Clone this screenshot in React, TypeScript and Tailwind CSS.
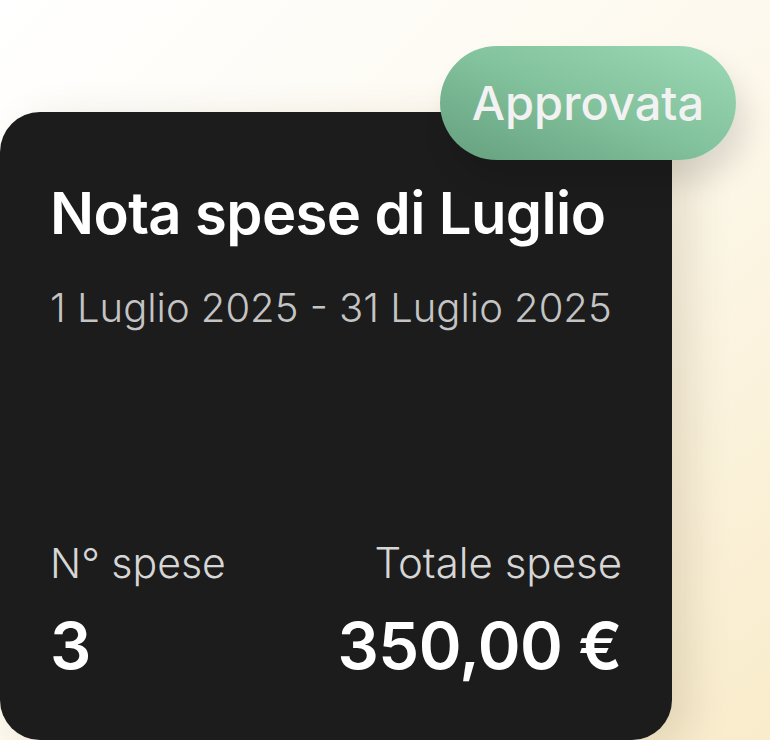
export default function App() {
  return (
    <div className="relative h-[740px] w-[770px] overflow-hidden bg-gradient-to-br from-[#ffffff] via-[#fdf9ee] to-[#f9eccb] font-['Inter',sans-serif]">
      <div className="pt-[112px]">
        <div className="flex h-[628px] w-[672px] flex-col justify-between rounded-[40px] bg-[#1c1c1c] px-[50px] pt-[71px] pb-[62px] shadow-[18px_10px_40px_rgba(120,100,60,0.18)]">
          <div>
            <h1 className="text-[58px] font-semibold leading-[60px] tracking-[-0.6px] text-white">
              Nota spese di Luglio
            </h1>
            <p className="mt-[45px] text-[40px] font-light leading-[40px] text-[#c4c4c4]">
              1 Luglio 2025 - 31 Luglio 2025
            </p>
          </div>
          <div className="flex items-end justify-between">
            <div>
              <p className="text-[41px] font-light leading-[42px] text-[#d6d6d6]">N° spese</p>
              <p className="mt-[29px] text-[65px] font-semibold leading-[65px] text-white">3</p>
            </div>
            <div className="text-right">
              <p className="text-[42px] font-light leading-[42px] text-[#d6d6d6]">Totale spese</p>
              <p className="mt-[29px] text-[65px] font-semibold leading-[65px] tracking-[-0.5px] text-white">350,00 €</p>
            </div>
          </div>
        </div>
      </div>
      <div className="absolute left-[440px] top-[46px] flex h-[114px] w-[296px] items-center justify-center rounded-full bg-gradient-to-tr from-[#659f7f] via-[#82c29c] to-[#9dd9b6] shadow-[10px_20px_30px_rgba(0,0,0,0.12)]">
        <span className="text-[47px] font-medium text-[#f2f2f2]">Approvata</span>
      </div>
    </div>
  );
}
